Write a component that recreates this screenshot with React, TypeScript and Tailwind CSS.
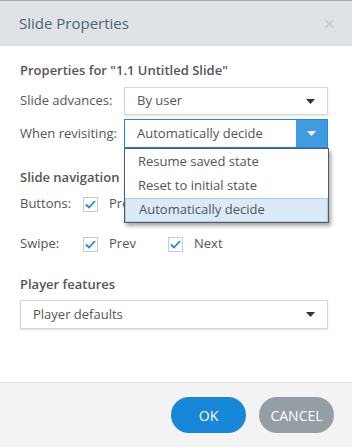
import React from "react";

const Check = () => (
  <span className="w-[15px] h-[15px] border border-[#c8ccd0] bg-white flex items-center justify-center">
    <svg width="11" height="9" viewBox="0 0 11 9">
      <path d="M1 4.5 L4 7.5 L10 1" fill="none" stroke="#1e88e5" strokeWidth="1.8" />
    </svg>
  </span>
);

const Caret = ({ color = "#333" }: { color?: string }) => (
  <svg width="9" height="5" viewBox="0 0 9 5">
    <path d="M0 0 H9 L4.5 5 Z" fill={color} />
  </svg>
);

export default function App() {
  return (
    <div
      className="w-[352px] h-[447px] bg-white flex flex-col text-[#555] overflow-hidden"
      style={{ fontFamily: '"Open Sans", "Noto Sans", sans-serif' }}
    >
      <div className="h-[46px] border-t border-[#a9a9a9] bg-[#dfe3e6] flex items-center justify-between pl-[19px] pr-[17px] shrink-0">
        <span className="text-[15px] text-[#4f6478]">Slide Properties</span>
        <span className="text-[20px] text-[#c4c8cc] leading-none">×</span>
      </div>

      <div className="flex-1 px-[20px] pt-[16px] text-[13px]">
        <div className="font-semibold leading-[16px]">Properties for "1.1 Untitled Slide"</div>

        <div className="flex items-center mt-[9px]">
          <span className="w-[104px]">Slide advances:</span>
          <div className="w-[204px] h-[28px] border border-[#d6d9dc] shadow-[0_1px_2px_rgba(0,0,0,0.12)] flex items-center justify-between pl-[12px] pr-[12px]">
            <span>By user</span>
            <Caret />
          </div>
        </div>

        <div className="flex items-center mt-[4px] relative">
          <span className="w-[104px]">When revisiting:</span>
          <div className="w-[204px] h-[29px] border border-[#1e88e5] flex items-center justify-between pl-[12px]">
            <span>Automatically decide</span>
            <div className="w-[31px] h-full bg-[#3f9ce0] flex items-center justify-center">
              <Caret color="#fff" />
            </div>
          </div>
          <div className="absolute left-[104px] top-[29px] w-[205px] bg-white border border-[#5a5a5a] shadow-[2px_3px_4px_rgba(0,0,0,0.35)] z-10 flex flex-col pt-[1px]">
            <div className="h-[24px] flex items-center pl-[13px]">Resume saved state</div>
            <div className="h-[24px] flex items-center pl-[13px]">Reset to initial state</div>
            <div className="h-[24px] flex items-center pl-[13px] bg-[#dbeaf7] border border-[#a8cdee]">Automatically decide</div>
          </div>
        </div>

        <div className="font-semibold leading-[16px] mt-[21px]">Slide navigation</div>

        <div className="flex items-center mt-[11px] h-[16px]">
          <span className="w-[63px]">Buttons:</span>
          <Check />
          <span className="ml-[11px]">Prev</span>
        </div>

        <div className="flex items-center mt-[24px] h-[16px]">
          <span className="w-[63px]">Swipe:</span>
          <Check />
          <span className="ml-[11px] w-[59px]">Prev</span>
          <Check />
          <span className="ml-[11px]">Next</span>
        </div>

        <div className="font-semibold leading-[16px] mt-[24px]">Player features</div>

        <div className="mt-[8px] w-[308px] h-[29px] border border-[#d6d9dc] shadow-[0_1px_2px_rgba(0,0,0,0.12)] flex items-center justify-between pl-[12px] pr-[12px]">
          <span>Player defaults</span>
          <Caret />
        </div>
      </div>

      <div className="h-[65px] shrink-0 border-t border-[#dde2e6] bg-[#f3f3f3] flex items-center justify-end gap-[13px] pr-[18px]">
        <button className="w-[75px] h-[36px] rounded-full bg-[#1787d9] text-white text-[14px]">OK</button>
        <button className="w-[75px] h-[36px] rounded-full bg-[#959ea5] text-white text-[14px]">CANCEL</button>
      </div>
    </div>
  );
}
